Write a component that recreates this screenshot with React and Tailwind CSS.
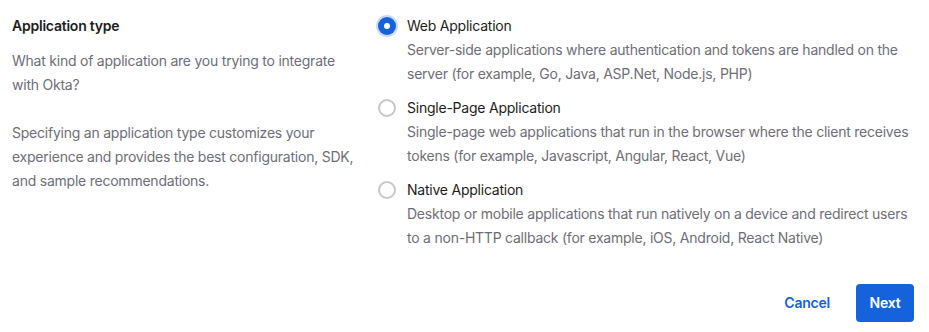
import React, { useState } from "react";

const options = [
  {
    id: "web",
    label: "Web Application",
    desc: ["Server-side applications where authentication and tokens are handled on the", "server (for example, Go, Java, ASP.Net, Node.js, PHP)"],
  },
  {
    id: "spa",
    label: "Single-Page Application",
    desc: ["Single-page web applications that run in the browser where the client receives", "tokens (for example, Javascript, Angular, React, Vue)"],
  },
  {
    id: "native",
    label: "Native Application",
    desc: ["Desktop or mobile applications that run natively on a device and redirect users", "to a non-HTTP callback (for example, iOS, Android, React Native)"],
  },
];

function Radio({ checked }) {
  if (checked) {
    return (
      <span className="flex h-[18px] w-[18px] items-center justify-center rounded-full bg-[#1662dd] shadow-[0_0_0_2px_#cbd9f7]">
        <span className="h-[6px] w-[6px] rounded-full bg-white" />
      </span>
    );
  }
  return <span className="block h-[18px] w-[18px] rounded-full border-2 border-[#c6c6cc] bg-white" />;
}

export default function App() {
  const [sel, setSel] = useState("web");
  return (
    <div className="h-[332px] w-[929px] bg-white text-[14px] leading-[24px] tracking-[-0.23px] text-[#1d1d21]" style={{ fontFamily: "Inter, 'Noto Sans', sans-serif" }}>
      <div className="flex pl-[12px] pt-[14px]">
        <div className="w-[366px] shrink-0">
          <div className="font-semibold">Application type</div>
          <p className="mt-[11px] w-[340px] text-[#6e6e78]">What kind of application are you trying to integrate with Okta?</p>
          <p className="mt-[24px] w-[345px] text-[#6e6e78]">Specifying an application type customizes your experience and provides the best configuration, SDK, and sample recommendations.</p>
        </div>
        <div className="flex flex-col gap-[10px]">
          {options.map((o) => (
            <label key={o.id} className="flex cursor-pointer gap-[11px]" onClick={() => setSel(o.id)}>
              <span className="pt-[3px]">
                <Radio checked={sel === o.id} />
              </span>
              <span>
                <span className="block">{o.label}</span>
                <span className="block text-[#6e6e78]">
                  {o.desc[0]}
                  <br />
                  {o.desc[1]}
                </span>
              </span>
            </label>
          ))}
        </div>
      </div>
      <div className="mt-[34px] flex items-center justify-end gap-[26px] pr-[15px]">
        <button className="font-semibold text-[#1662dd]">Cancel</button>
        <button className="h-[38px] w-[58px] rounded-[4px] bg-[#1662dd] font-semibold text-white">Next</button>
      </div>
    </div>
  );
}
